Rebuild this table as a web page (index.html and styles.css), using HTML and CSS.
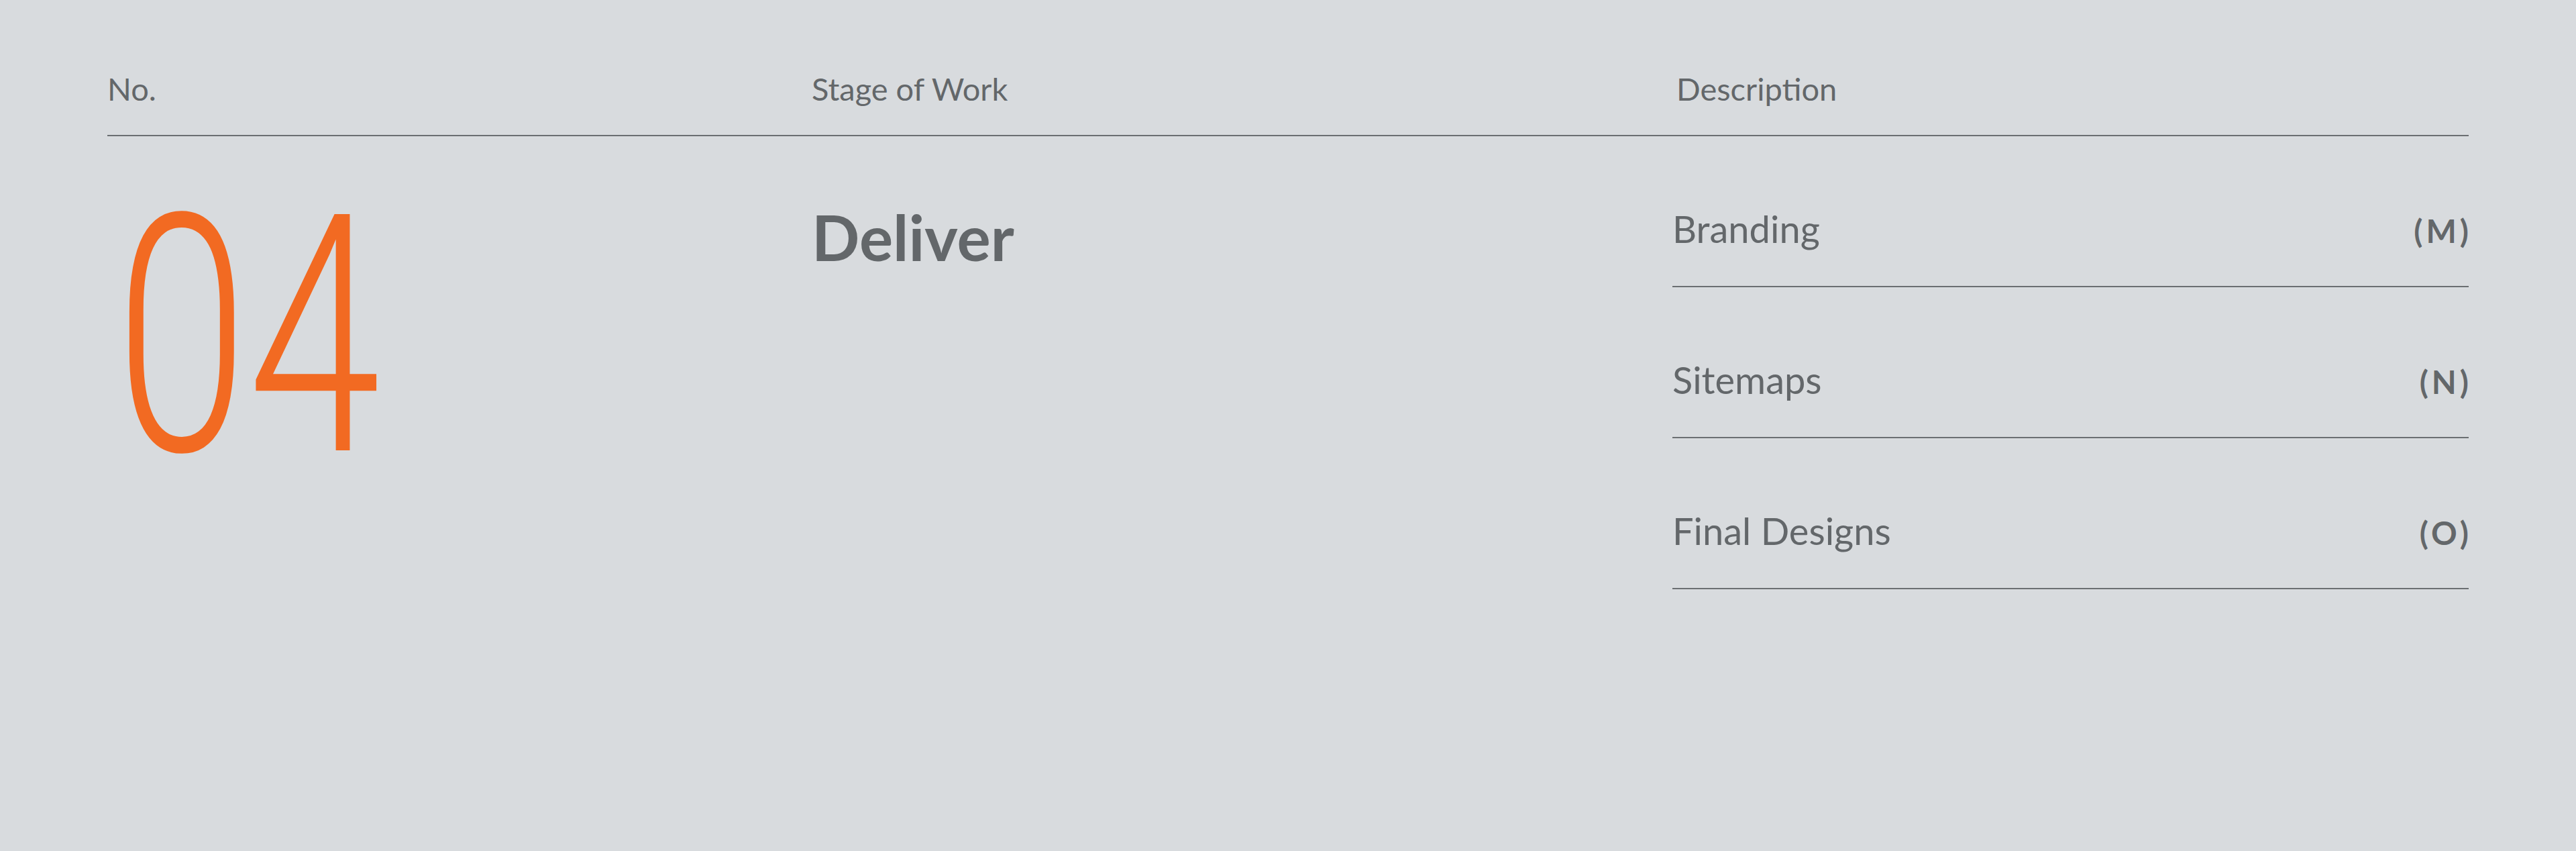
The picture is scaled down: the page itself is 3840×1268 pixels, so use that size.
FILE: index.html
```html
<!DOCTYPE html>
<html lang="en">
<head>
<meta charset="utf-8">
<title>Process — Deliver</title>
<link rel="stylesheet" href="styles.css">
</head>
<body>
<section class="process">
  <div class="head">
    <div class="head-cell">No.</div>
    <div class="head-cell">Stage of Work</div>
    <div class="head-cell head-desc">Description</div>
  </div>
  <div class="stage">
    <div class="num">04</div>
    <div class="title">Deliver</div>
    <ul class="items">
      <li class="item"><span class="item-name">Branding</span><span class="item-tag">(M)</span></li>
      <li class="item"><span class="item-name">Sitemaps</span><span class="item-tag">(N)</span></li>
      <li class="item"><span class="item-name">Final Designs</span><span class="item-tag">(O)</span></li>
    </ul>
  </div>
</section>
</body>
</html>
```

FILE: styles.css
```css
html, body {
  margin: 0;
  padding: 0;
}
body {
  background: #d8dbde;
  color: #63676a;
  font-family: Lato, "Open Sans", sans-serif;
  width: 3840px;
  height: 1268px;
  overflow: hidden;
}
.process {
  padding: 0 160px;
}
.head {
  display: grid;
  grid-template-columns: 1050px 1283px 1fr;
  padding-top: 105px;
  padding-bottom: 41px;
  border-bottom: 2px solid #6b6f72;
}
.head-cell {
  font-size: 47px;
  line-height: 55px;
  font-weight: 400;
}
.head-desc {
  padding-left: 6px;
}
.stage {
  display: grid;
  grid-template-columns: 1050px 1283px 1fr;
}
.num {
  color: #f26a22;
  font-family: Roboto, sans-serif;
  font-weight: 300;
  font-size: 495px;
  line-height: 1;
  letter-spacing: 0;
  padding-top: 52px;
  transform: scaleX(0.72);
  transform-origin: left top;
  margin-left: 12px;
}
.title {
  padding-top: 93px;
  font-size: 94px;
  line-height: 114px;
  font-weight: 700;
}
.items {
  list-style: none;
  margin: 0;
  padding: 0;
}
.item {
  display: flex;
  justify-content: space-between;
  align-items: baseline;
  padding-top: 104px;
  padding-bottom: 52px;
  border-bottom: 2px solid #6b6f72;
}
.item-name {
  font-size: 56px;
  line-height: 67px;
}
.item-tag {
  font-size: 48px;
  font-weight: 700;
  letter-spacing: 5px;
  margin-right: -5px;
}
```
